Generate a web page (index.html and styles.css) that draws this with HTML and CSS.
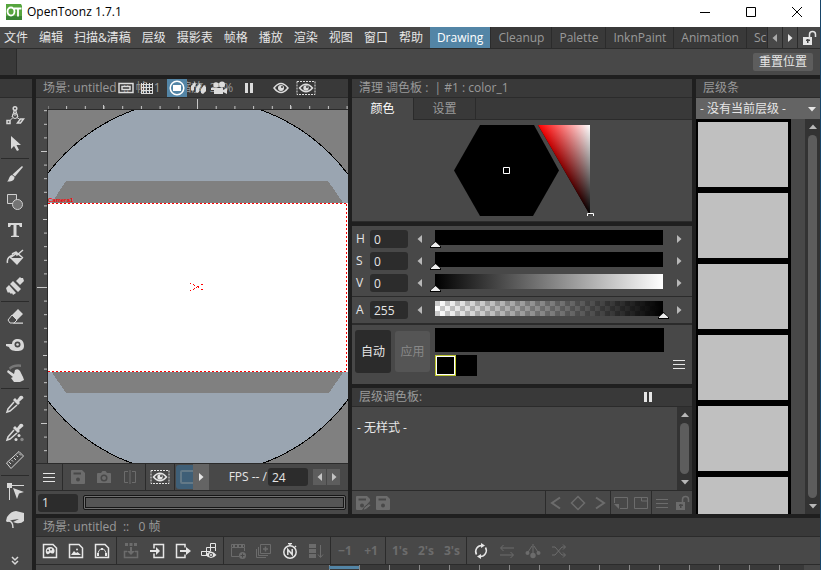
FILE: index.html
```html
<!DOCTYPE html>
<html lang="zh-CN">
<head>
<meta charset="utf-8">
<meta name="viewport" content="width=device-width, initial-scale=1">
<title>OpenToonz 1.7.1</title>
<link rel="stylesheet" href="styles.css">
</head>
<body>
<svg class="sprite" aria-hidden="true">
  <defs>
    <symbol id="i-menu" viewBox="0 0 16 16"><path d="M2 4.500h12M2 8.500h12M2 12.500h12" class="s"/></symbol>
    <symbol id="i-left" viewBox="0 0 16 16"><path d="M10 4v8L5.500 8z"/></symbol>
    <symbol id="i-right" viewBox="0 0 16 16"><path d="M6 4v8l4.500-4z"/></symbol>
    <symbol id="i-up" viewBox="0 0 16 16"><path d="M4 10h8L8 5.500z"/></symbol>
    <symbol id="i-down" viewBox="0 0 16 16"><path d="M4 6h8l-4 4.500z"/></symbol>
    <symbol id="i-pause" viewBox="0 0 16 16"><path d="M4 3h3v10H4zM9 3h3v10H9z"/></symbol>
    <symbol id="i-eye" viewBox="0 0 16 16"><path d="M1 8Q8-1 15 8Q8 17 1 8z" class="s t"/><circle cx="8" cy="8" r="3"/><circle cx="9" cy="7" r="1" fill="#393939"/></symbol>
    <symbol id="i-eyebox" viewBox="0 0 20 16"><path d="M1 1.500h18v13H1z" class="s" stroke-dasharray="2 1"/><path d="M3.500 8Q10 .500 16.500 8Q10 15.500 3.500 8z" class="s t"/><circle cx="10" cy="8" r="2.700"/><circle cx="11" cy="7" r="1" fill="#393939"/></symbol>
    <symbol id="i-lock" viewBox="0 0 16 16"><path d="M2 7h9v8H2z"/><path d="M8.500 7V4.500a3 3 0 0 1 6 0V7" class="s t"/><path d="M6 9h1.500v4H6z" fill="#484848"/><path d="M5 9.500h4v1.500H5z" fill="#484848"/></symbol>
    <symbol id="i-save" viewBox="0 0 16 16"><path d="M2 1h10l3 3v10a1 1 0 0 1-1 1H2a1 1 0 0 1-1-1V2a1 1 0 0 1 1-1z"/><path d="M3.500 3.500h7.500v2H3.500z" fill="#484848"/><circle cx="8" cy="10.500" r="2" fill="#484848"/></symbol>
    <symbol id="i-saveas" viewBox="0 0 16 16"><path d="M2 1h10l3 3v2L7 15H2a1 1 0 0 1-1-1V2a1 1 0 0 1 1-1z"/><path d="M3.500 3.500h7.500v2H3.500z" fill="#484848"/><circle cx="7" cy="10.500" r="2" fill="#484848"/><path d="M8 15.500l1-3 5-4 2 2-5 4z" stroke="#484848"/></symbol>
    <symbol id="i-camera" viewBox="0 0 16 16"><path d="M2 4h3l1.500-2h3L11 4h3a1 1 0 0 1 1 1v9H1V5a1 1 0 0 1 1-1z"/><circle cx="8" cy="9" r="3.500" fill="#484848"/><circle cx="8" cy="9" r="2"/></symbol>
    <symbol id="i-compare" viewBox="0 0 16 16"><path d="M6 2.500H2.500v11H6M10 2.500h3.500v11H10M8 1v14" class="s"/></symbol>

    <symbol id="i-animate" viewBox="0 0 20 20"><circle cx="10" cy="3.500" r="1.800" class="s t"/><circle cx="10" cy="11" r="2.500" class="s"/><path d="M10 5.500V11M9 6l-2 6M11 6l2 6M8 12.500l-3 3M12 12.500l3 2" class="s"/><path d="M2 15.500h3v3H2zM12.500 18l3-4h3l-3 4z" class="s t"/></symbol>
    <symbol id="i-arrow" viewBox="0 0 20 20"><path d="M6 3v13l3-3 3 5 2-1-2.500-5H16z"/></symbol>
    <symbol id="i-brush" viewBox="0 0 20 20"><path d="M18 3L10 12.500 7.500 10.500 17 2zM7 11l2.500 2c0 4-4 5-7.500 4.500 2-1 2-6 5-6.500z"/></symbol>
    <symbol id="i-shapes" viewBox="0 0 20 20"><path d="M2.500 2.500h9v9h-9z" fill="#5a5a5a" stroke="#d0d0d0"/><circle cx="12.500" cy="12.500" r="5" fill="#747474" stroke="#d0d0d0"/></symbol>
    <symbol id="i-type" viewBox="0 0 20 20"><path d="M3 3h14v4h-2L14 5h-2.500v10.500L14 16v1H6v-1l2.500-.500V5H6L5 7H3z"/></symbol>
    <symbol id="i-fill" viewBox="0 0 20 20"><path d="M5 10h13l-6 7z"/><path d="M5 10l7-5 6 5M2.500 15C1.500 10 5 8 8 7M7 6l4-2 1 3 6-5" class="s t"/></symbol>
    <symbol id="i-paint" viewBox="0 0 20 20"><path d="M4 9l7 8-3 2-1-2-1 1-2-2-1 1-1-2-1-3zM5 8l3-3 8 8-3 3zM11 5l4-4 1 1h2l1 3-4 4z"/></symbol>
    <symbol id="i-eraser" viewBox="0 0 20 20"><path d="M3 13l4-5 5 5-3 3H5z" class="s"/><path d="M7 8l6-6 5 5-6 6zM9 15.500h9v1.200H8z"/></symbol>
    <symbol id="i-tape" viewBox="0 0 20 20"><path d="M1 9h6c0-3 2-5 6-5 5 0 6 4 6 7 0 4-3 5-7 5s-7-1-8-4L1 11z"/><circle cx="12.500" cy="9.500" r="3" fill="#484848"/><circle cx="12.500" cy="9.500" r="1.300"/></symbol>
    <symbol id="i-finger" viewBox="0 0 20 20"><path d="M4 4.500q5-4 12-3v2.500Q9 3 5 7z" fill="#777"/><path d="M3 7l6 4 1-4q3-2 5 1l3 6 1 3-4 2H9l-3-4 2-1-6-5z"/></symbol>
    <symbol id="i-picker" viewBox="0 0 20 20"><path d="M11 5l1 1 3-4q3-1 3.500 2L14 8l1 1-2 2-5-5 2-2z"/><path d="M9 8l-6 7-1 3 3-1 7-6" class="s t"/></symbol>
    <symbol id="i-rgb" viewBox="0 0 20 20"><path d="M11 5l1 1 3-4q3-1 3.500 2L14 8l1 1-2 2-5-5 2-2z"/><path d="M9 8l-6 7-1 3 3-1 7-6" class="s t"/><circle cx="14" cy="13.500" r="1.500"/><circle cx="11" cy="17.500" r="1.500"/><circle cx="17" cy="17.500" r="1.700" fill="#888"/></symbol>
    <symbol id="i-ruler" viewBox="0 0 20 20"><path d="M1.500 13L14 1.500 18.500 6 6 18.500zM4 12l2 2M6.500 10l1.500 1.500M9 8l2 2M11.500 5.500L13 7M14 3.500l2 2" class="s"/></symbol>
    <symbol id="i-control" viewBox="0 0 20 20"><path d="M2 2h5v5H2zM8 7l11 4-5 1.500L12 18z"/><path d="M7 4.500h12M4.500 7v12" class="s"/></symbol>
    <symbol id="i-pinch" viewBox="0 0 20 20"><path d="M2 8q4-6 9-6l8 2v8q-3 3-8 2l-3-1 6-3-7 1-5 2-1-1z"/><path d="M2 12q6-1 6 7" class="s t"/></symbol>
    <symbol id="i-more" viewBox="0 0 20 20"><path d="M7 6l3 3 3-3M7 10l3 3 3-3" class="s t"/></symbol>

    <symbol id="i-safe" viewBox="0 0 16 16"><path d="M1 3.500h14v9H1zM4 6.500h8v3H4z" class="s t"/></symbol>
    <symbol id="i-grid" viewBox="0 0 16 16"><path d="M4.500 3v11M7.500 3v11M10.500 3v11M2 4.500h12M2 7.500h12M2 10.500h12M2.500 3v11M13.500 3v11M2 13.500h12" class="s"/></symbol>
    <symbol id="i-camview" viewBox="0 0 16 16"><circle cx="8" cy="8" r="6.800" class="s t"/><path d="M4 5h8v6H4z"/></symbol>
    <symbol id="i-three" viewBox="0 0 16 16"><path d="M1 10V6l4-4 1 3-2 2v3l-2 1zM6 12V8l4-5 1 3-2 3v3l-2 1zM11 13V9l3-4 2 2v4l-3 3z"/></symbol>
    <symbol id="i-movie" viewBox="0 0 16 16"><circle cx="5" cy="5" r="2.700"/><circle cx="11" cy="4.500" r="3"/><path d="M3 8h9v6H3zM12 10l4-2v6l-4-2zM0 8h3v2H0z"/></symbol>

    <symbol id="i-page-pal" viewBox="0 0 16 16"><path d="M1.500 1.500H11L14.500 5v9.500h-13z" class="s t"/><path d="M8 4c3 0 5 2 4.500 4.500S10 11 9 10s-2 2-4 1-2-7 3-7z"/><circle cx="6" cy="7.500" r="1" fill="#484848"/><circle cx="9" cy="6.500" r="1" fill="#484848"/></symbol>
    <symbol id="i-page-img" viewBox="0 0 16 16"><path d="M1.500 1.500H11L14.500 5v9.500h-13z" class="s t"/><path d="M3 12l3-4 2 2 1.500-1L13 12z"/><circle cx="9" cy="6.500" r="1"/></symbol>
    <symbol id="i-page-vec" viewBox="0 0 16 16"><path d="M1.500 1.500H11L14.500 5v9.500h-13z" class="s t"/><path d="M4 12q0-6 4-6t4 6" class="s"/><path d="M3 10h2v3H3zM11 10h2v3h-2zM7 5h2v2H7z"/></symbol>
    <symbol id="i-load" viewBox="0 0 16 16"><path d="M2 0h3v3H2zM6.500 0h3v3h-3zM11 0h3v3h-3zM7 4h2v4h3l-4 4-4-4h3z"/><path d="M4 8.500H1.500v6h13v-6H12" class="s t"/></symbol>
    <symbol id="i-in" viewBox="0 0 16 16"><path d="M5 5.500v-4h9.500v13H5v-4" class="s t"/><path d="M1 7h6V4l4 4-4 4V9H1z"/></symbol>
    <symbol id="i-out" viewBox="0 0 16 16"><path d="M10 4.500v-3H1.500v13H10v-3" class="s t"/><path d="M5 7h6V4l5 4-5 4V9H5z"/></symbol>
    <symbol id="i-gridview" viewBox="0 0 16 16"><path d="M5 12.500H.500v-4h9M5.500 13V4.500h9V8M9.500 8V.500h5v4M.500 8.500h6" class="s"/><path d="M4.500 12q5.500-7 11 0-5.500 6-11 0z"/><circle cx="10" cy="12" r="2" fill="#484848"/><circle cx="10" cy="12" r="1"/></symbol>
    <symbol id="i-newframe" viewBox="0 0 16 16"><path d="M9 13.500H1.500V4.500h13V8M1.500 4V1.500h13V4" class="s"/><path d="M3 2h2v2H3zM7 2h2v2H7zM11 2h2v2h-2z"/><circle cx="12.500" cy="12.500" r="3.500"/><path d="M12.500 10.500v4M10.500 12.500h4" stroke="#484848"/></symbol>
    <symbol id="i-dup" viewBox="0 0 16 16"><path d="M4.500 1.500h10v9h-10zM2.500 4v8.500H12M.500 6v8.500H10" class="s"/><path d="M9.500 3.500v5M7 6h5" class="s t"/></symbol>
    <symbol id="i-timer" viewBox="0 0 16 16"><circle cx="8" cy="9" r="6.200" class="s t"/><path d="M6 .500h4M8 1v2M13 3l1 1" class="s t"/><path d="M5.800 12V6.500l4.400 5V6" class="s t"/></symbol>
    <symbol id="i-stack" viewBox="0 0 16 16"><path d="M1 1h7v4H1zM1 6h7v4H1zM1 11h7v4H1z"/><path d="M12.500 2v12M10 11.500l2.500 3 2.500-3" class="s"/></symbol>
    <symbol id="i-repeat" viewBox="0 0 16 16"><path d="M9 2.500a6 6 0 0 0-5.500 9M7 13.500a6 6 0 0 0 5.500-9" class="s t"/><path d="M8 0l4 2.500L8 5zM8 11v5l-4-2.500z"/></symbol>
    <symbol id="i-swap" viewBox="0 0 16 16"><path d="M2 5h13M1 12h13M4.500 2L1.500 5l3 3M11.500 9l3 3-3 3" class="s"/></symbol>
    <symbol id="i-swing" viewBox="0 0 16 16"><path d="M8 1v10M7 3L3 9M9 3l4 6" class="s"/><circle cx="8" cy="12.500" r="2.700"/><circle cx="2.500" cy="10" r="2"/><circle cx="13.500" cy="10" r="2"/></symbol>
    <symbol id="i-random" viewBox="0 0 16 16"><path d="M1 4h3l7 8h3M1 12h3l7-8h3M12 1.500L14.500 4 12 6.500M12 9.500l2.500 2.500-2.500 2.500" class="s"/></symbol>
    <symbol id="i-prev" viewBox="0 0 16 16"><path d="M12 2.500L4 8l8 5.500" class="s w"/></symbol>
    <symbol id="i-next" viewBox="0 0 16 16"><path d="M4 2.500L12 8l-8 5.500" class="s w"/></symbol>
    <symbol id="i-key" viewBox="0 0 16 16"><path d="M8 1.500L14.500 8 8 14.500 1.500 8z" class="s t"/></symbol>
    <symbol id="i-newstyle" viewBox="0 0 16 16"><path d="M1.500 8V2.500h13v11H7" class="s"/><path d="M1 9h5v5z"/></symbol>
    <symbol id="i-newpage" viewBox="0 0 16 16"><path d="M1.500 2.500h13v11h-13zM8.500 3v3h6" class="s"/></symbol>
  </defs>
</svg>

<header class="titlebar">
  <svg class="logo" viewBox="0 0 16 16" role="img" aria-label="OpenToonz"><path fill="#56a53e" d="M0 0h15l1 2v14H0z"/><path fill="#3a8534" d="M0 12h16v4H0z"/><ellipse cx="5" cy="7.500" rx="3.500" ry="4" fill="none" stroke="#fff" stroke-width="1.800"/><path d="M8 4.500h7.500M12 5v7.500" stroke="#fff" stroke-width="1.800"/></svg>
  <h1>OpenToonz 1.7.1</h1>
  <button class="win" aria-label="最小化"><svg viewBox="0 0 12 12"><path d="M1 6.500h10"/></svg></button>
  <button class="win" aria-label="最大化"><svg viewBox="0 0 12 12"><path d="M1.500 1.500h9v9h-9z"/></svg></button>
  <button class="win" aria-label="关闭"><svg viewBox="0 0 12 12"><path d="M1 1l10 10M11 1L1 11"/></svg></button>
</header>

<nav class="menubar">
  <div class="menus">
    <button>文件</button><button>编辑</button><button>扫描&amp;清稿</button><button>层级</button><button>摄影表</button><button>帧格</button><button>播放</button><button>渲染</button><button>视图</button><button>窗口</button><button>帮助</button>
  </div>
  <div class="rooms">
    <button class="current">Drawing</button><button>Cleanup</button><button>Palette</button><button>InknPaint</button><button>Animation</button><button>Schematic</button>
  </div>
  <button class="scroll dim" aria-label="向左"><svg class="ic"><use href="#i-left"/></svg></button>
  <button class="scroll" aria-label="向右"><svg class="ic"><use href="#i-right"/></svg></button>
  <button class="roomlock" aria-label="锁定"><svg class="ic"><use href="#i-lock"/></svg></button>
</nav>

<div class="options"><button>重置位置</button></div>

<main class="workspace">
  <aside class="toolbox">
    <div class="bar"></div>
    <div class="tools">
      <button aria-label="动画"><svg><use href="#i-animate"/></svg></button>
      <button aria-label="选择"><svg><use href="#i-arrow"/></svg></button>
      <hr>
      <button aria-label="画笔"><svg><use href="#i-brush"/></svg></button>
      <button aria-label="几何"><svg><use href="#i-shapes"/></svg></button>
      <button aria-label="文字"><svg><use href="#i-type"/></svg></button>
      <button aria-label="填充"><svg><use href="#i-fill"/></svg></button>
      <button aria-label="涂刷"><svg><use href="#i-paint"/></svg></button>
      <hr>
      <button aria-label="橡皮"><svg><use href="#i-eraser"/></svg></button>
      <button aria-label="胶带"><svg><use href="#i-tape"/></svg></button>
      <button aria-label="手指"><svg><use href="#i-finger"/></svg></button>
      <hr>
      <button aria-label="取样"><svg><use href="#i-picker"/></svg></button>
      <button aria-label="RGB 取样"><svg><use href="#i-rgb"/></svg></button>
      <button aria-label="标尺"><svg><use href="#i-ruler"/></svg></button>
      <hr>
      <button aria-label="控制点"><svg><use href="#i-control"/></svg></button>
      <button aria-label="捏合"><svg><use href="#i-pinch"/></svg></button>
    </div>
    <button class="more" aria-label="更多"><svg><use href="#i-more"/></svg></button>
  </aside>

  <div class="desk">
    <div class="upper">
      <section class="viewer">
        <div class="bar">
          <span class="caption">场景: untitled&nbsp; ::&nbsp; 帧: 1&nbsp; ::&nbsp; 缩放: 35%</span>
          <div class="viewtools">
            <div class="group"><button aria-label="安全区"><svg class="ic"><use href="#i-safe"/></svg></button><button aria-label="网格"><svg class="ic"><use href="#i-grid"/></svg></button></div>
            <div class="group"><button class="on" aria-label="摄影台"><svg class="ic"><use href="#i-camview"/></svg></button><button aria-label="3D"><svg class="ic"><use href="#i-three"/></svg></button><button aria-label="摄影机"><svg class="ic"><use href="#i-movie"/></svg></button></div>
            <div class="group"><button aria-label="冻结"><svg class="ic"><use href="#i-pause"/></svg></button></div>
            <div class="group wide"><button aria-label="预览"><svg class="ic"><use href="#i-eye"/></svg></button><button aria-label="局部预览"><svg class="ic box"><use href="#i-eyebox"/></svg></button></div>
          </div>
        </div>
        <div class="stage">
          <svg viewBox="36 98 312 365" preserveAspectRatio="xMidYMid slice">
            <defs>
              <clipPath id="view"><path d="M48 110h300v353H48z"/></clipPath>
              <pattern id="tickx" x="197" y="98" width="18.700" height="12" patternUnits="userSpaceOnUse"><path fill="#c8c8c8" d="M0 8h1v3H0z"/></pattern>
              <pattern id="ticky" x="36" y="287" width="12" height="13.600" patternUnits="userSpaceOnUse"><path fill="#c8c8c8" d="M8 0h3v1H8z"/></pattern>
            </defs>
            <path fill="#484848" d="M36 98h312v365H36z"/>
            <g shape-rendering="crispEdges">
              <path fill="url(#tickx)" d="M48 98h300v11H48z"/>
              <path fill="url(#ticky)" d="M36 110h11v353H36z"/>
              <path fill="#c8c8c8" d="M197 99h1v10h-1zM103 105h1v4h-1zM290 105h1v4h-1zM37 287h10v1H37zM43 219h4v1h-4zM41 151h6v1h-6zM43 355h4v1h-4zM41 423h6v1h-6z"/>
              <path fill="#2b2b2b" d="M47 109h301v1H48v353h-1z"/>
            </g>
            <g clip-path="url(#view)" shape-rendering="crispEdges">
              <path fill="#808080" d="M48 110h300v353H48z"/>
              <circle cx="197.500" cy="287" r="188" fill="#9aa5b1" stroke="#000"/>
              <path fill="#808080" d="M66 181h262l16 23v167l-15 22H66l-15-22V204z"/>
              <path fill="#fff" d="M48 204h300v167H48z"/>
              <path fill="none" stroke="#fff" d="M48 203.500h300M48 371.500h300"/>
              <path fill="none" stroke="#f00" stroke-dasharray="2 2" d="M48 203.500h300M48 371.500h300M346.500 204v168"/>
              <path fill="#f00" d="M190 283h1v1h-1zM190 290h1v1h-1zM193 284h1v1h-1zM194 285h1v1h-1zM194 288h1v1h-1zM193 289h1v1h-1zM197 286h2v1h-2zM198 287h1v1h-1zM201 284h2v1h-2zM201 289h2v1h-2zM196 287h1v1h-1z"/>
            </g>
            <text x="48" y="202" class="camname">Camera1</text>
          </svg>
        </div>
        <div class="playbar">
          <div class="cell"><button aria-label="选项"><svg class="ic"><use href="#i-menu"/></svg></button></div>
          <div class="cell dim spread"><button aria-label="保存"><svg class="ic"><use href="#i-save"/></svg></button><button aria-label="快照"><svg class="ic"><use href="#i-camera"/></svg></button><button aria-label="比较"><svg class="ic"><use href="#i-compare"/></svg></button></div>
          <div class="cell eye"><button aria-label="预览框"><svg class="ic box"><use href="#i-eyebox"/></svg></button></div>
          <button class="bluebtn" aria-label="背景"><i></i></button>
          <button class="greybtn" aria-label="展开"><svg class="ic"><use href="#i-right"/></svg></button>
          <label class="fps" for="fps">FPS -- /</label>
          <input id="fps" class="num" value="24">
          <div class="steps"><button aria-label="减少"><svg class="ic"><use href="#i-left"/></svg></button><button aria-label="增加"><svg class="ic"><use href="#i-right"/></svg></button></div>
        </div>
        <div class="framebar">
          <input class="num" aria-label="当前帧" value="1">
          <div class="slider"></div>
        </div>
      </section>

      <div class="middle">
        <section class="panel">
          <div class="bar"><span class="caption">清理 调色板 :&nbsp; | #1 : color_1</span></div>
          <div class="tabs"><button class="current">颜色</button><button>设置</button></div>
          <div class="wheel">
            <svg viewBox="0 0 142 94" aria-label="色轮">
              <defs>
                <linearGradient id="red" x1="0" y1="0" x2="0" y2="1"><stop stop-color="#f00"/><stop offset="1" stop-color="#000"/></linearGradient>
                <linearGradient id="cyan" gradientUnits="userSpaceOnUse" x1="97" y1="22.500" x2="136" y2="0"><stop stop-color="#000"/><stop offset="1" stop-color="#0ff"/></linearGradient>
              </defs>
              <path d="M0 45.500L26 0h54l25 45.500L79 91H26z"/>
              <g class="mix"><path fill="url(#red)" d="M84 0h52v90z"/><path class="add" fill="url(#cyan)" d="M84 0h52v90z"/></g>
              <path fill="none" stroke="#fff" d="M49.500 42.500h6v6h-6zM133.500 91v-2.500h6V91"/>
            </svg>
          </div>
        </section>
        <section class="sliders">
          <div class="row"><label for="h">H</label><input class="num" id="h" value="0"><button aria-label="减少 H"><svg class="ic"><use href="#i-left"/></svg></button><div class="track"><i class="knob"></i></div><button aria-label="增加 H"><svg class="ic"><use href="#i-right"/></svg></button></div>
          <div class="row"><label for="s">S</label><input class="num" id="s" value="0"><button aria-label="减少 S"><svg class="ic"><use href="#i-left"/></svg></button><div class="track"><i class="knob"></i></div><button aria-label="增加 S"><svg class="ic"><use href="#i-right"/></svg></button></div>
          <div class="row"><label for="v">V</label><input class="num" id="v" value="0"><button aria-label="减少 V"><svg class="ic"><use href="#i-left"/></svg></button><div class="track value"><i class="knob"></i></div><button aria-label="增加 V"><svg class="ic"><use href="#i-right"/></svg></button></div>
          <div class="row alpha"><label for="a">A</label><input class="num" id="a" value="255"><button aria-label="减少 A"><svg class="ic"><use href="#i-left"/></svg></button><div class="track matte"><i class="knob end"></i></div><button aria-label="增加 A"><svg class="ic"><use href="#i-right"/></svg></button></div>
          <div class="apply">
            <button class="auto">自动</button>
            <button class="use" disabled>应用</button>
            <div class="colors"><div class="big"></div><div class="pair"><i class="picked"></i><i></i></div></div>
            <button class="opts" aria-label="选项"><svg class="ic"><use href="#i-menu"/></svg></button>
          </div>
        </section>
        <section class="palette">
          <div class="bar"><span class="caption">层级调色板:</span><button aria-label="冻结"><svg class="ic"><use href="#i-pause"/></svg></button></div>
          <div class="list">
            <p>- 无样式 -</p>
            <div class="scrollbar"><svg class="ic"><use href="#i-up"/></svg><i></i><svg class="ic"><use href="#i-down"/></svg></div>
          </div>
          <div class="foot dim">
            <div class="first"><button aria-label="另存"><svg class="ic"><use href="#i-saveas"/></svg></button><button aria-label="保存"><svg class="ic"><use href="#i-save"/></svg></button></div>
            <div class="keys"><button aria-label="上一个"><svg class="ic"><use href="#i-prev"/></svg></button><button aria-label="关键帧"><svg class="ic"><use href="#i-key"/></svg></button><button aria-label="下一个"><svg class="ic"><use href="#i-next"/></svg></button></div>
            <div><button aria-label="新建样式"><svg class="ic"><use href="#i-newstyle"/></svg></button><button aria-label="新建页"><svg class="ic"><use href="#i-newpage"/></svg></button></div>
            <div><button aria-label="选项"><svg class="ic"><use href="#i-menu"/></svg></button><button aria-label="锁定"><svg class="ic"><use href="#i-lock"/></svg></button></div>
          </div>
        </section>
      </div>

      <section class="strip">
        <div class="bar"><span class="caption">层级条</span></div>
        <div class="pick"><select aria-label="当前层级"><option>- 没有当前层级 -</option></select><svg class="ic"><use href="#i-down"/></svg></div>
        <div class="frames">
          <div class="film"><i></i><i></i><i></i><i></i><i></i><i></i></div>
          <div class="scrollbar"><svg class="ic"><use href="#i-up"/></svg><i></i><svg class="ic"><use href="#i-down"/></svg></div>
        </div>
      </section>
    </div>

    <section class="xsheet">
      <div class="bar"><span class="caption">场景: untitled&nbsp; ::&nbsp;&nbsp; 0 帧</span></div>
      <div class="commands">
        <div><button aria-label="新建 Toonz 层"><svg class="ic"><use href="#i-page-pal"/></svg></button><button aria-label="新建位图层"><svg class="ic"><use href="#i-page-img"/></svg></button><button aria-label="新建矢量层"><svg class="ic"><use href="#i-page-vec"/></svg></button></div>
        <div><button class="dim" aria-label="载入"><svg class="ic"><use href="#i-load"/></svg></button><button aria-label="进入"><svg class="ic"><use href="#i-in"/></svg></button><button aria-label="退出"><svg class="ic"><use href="#i-out"/></svg></button><button aria-label="切换"><svg class="ic"><use href="#i-gridview"/></svg></button></div>
        <div><button class="dim" aria-label="新建帧"><svg class="ic"><use href="#i-newframe"/></svg></button><button class="dim" aria-label="复制帧"><svg class="ic"><use href="#i-dup"/></svg></button><button aria-label="自动输入"><svg class="ic"><use href="#i-timer"/></svg></button><button class="dim" aria-label="填入"><svg class="ic"><use href="#i-stack"/></svg></button></div>
        <div><button class="dim">−1</button><button class="dim">+1</button></div>
        <div><button class="dim">1's</button><button class="dim">2's</button><button class="dim">3's</button></div>
        <div><button aria-label="循环"><svg class="ic"><use href="#i-repeat"/></svg></button><button class="dim" aria-label="反转"><svg class="ic"><use href="#i-swap"/></svg></button><button class="dim" aria-label="摆动"><svg class="ic"><use href="#i-swing"/></svg></button><button class="dim" aria-label="随机"><svg class="ic"><use href="#i-random"/></svg></button></div>
      </div>
      <div class="timeline"><div class="columns"></div><div class="cells"></div><div class="tail"></div></div>
    </section>
  </div>
</main>
</body>
</html>
```
FILE: styles.css
```css
* { box-sizing: border-box; }

body {
  margin: 0;
  height: 100vh;
  display: flex;
  flex-direction: column;
  overflow: hidden;
  background: #1f1f1f;
  border-right: 1px solid #174468;
  color: #e6e6e6;
  font: 12px/16px "Open Sans", "Noto Sans CJK SC", sans-serif;
}

button, input, select { font: inherit; color: inherit; }
button {
  display: flex;
  align-items: center;
  justify-content: center;
  margin: 0;
  padding: 0;
  border: 0;
  background: none;
  white-space: nowrap;
}
svg { display: block; flex: none; fill: currentColor; }
.s { fill: none; stroke: currentColor; }
.t { stroke-width: 1.5; }
.w { stroke-width: 2; }
.sprite { position: absolute; width: 0; height: 0; }
.ic { width: 16px; height: 16px; }
.ic.box { width: 20px; }
.dim { color: #6c6c6c; }

/* Title bar */
.titlebar {
  flex: none;
  display: flex;
  align-items: center;
  height: 27px;
  padding: 0 0 4px 6px;
  background: #fff;
  color: #000;
}
.logo { width: 16px; height: 16px; }
h1 { margin: 0 auto 0 5px; font-size: 12px; font-weight: 400; }
.win { width: 46px; height: 22px; }
.win svg { width: 12px; height: 12px; fill: none; stroke: #000; }

/* Menu bar */
.menubar {
  flex: none;
  display: flex;
  height: 22px;
  background: #484848;
  border-bottom: 1px solid #2b2b2b;
}
.menus { display: flex; gap: 11px; padding: 0 7px 0 4px; flex: none; }
.rooms { display: flex; flex: 1; min-width: 0; overflow: hidden; background: #393939; }
.rooms button { flex: none; padding: 0 7px; border-right: 1px solid #2b2b2b; color: #999; }
.rooms .current { background: #5385a6; color: #fff; }
.scroll { width: 15px; border-left: 1px solid #2b2b2b; }
.scroll.dim { color: #aaa; }
.roomlock { width: 23px; border-left: 1px solid #2b2b2b; }

.options {
  flex: none;
  display: flex;
  justify-content: flex-end;
  align-items: center;
  height: 26px;
  padding-right: 7px;
  background: linear-gradient(90deg, #393939 16px, #2b2b2b 16px, #2b2b2b 17px, #484848 17px);
}
.options button { height: 18px; padding: 0 6px; border-radius: 2px; background: #5d5d5d; }

/* Shared panel header */
.bar {
  flex: none;
  display: flex;
  align-items: center;
  height: 19px;
  background: #393939;
  border-bottom: 1px solid #2b2b2b;
}
.caption { padding-left: 7px; color: #999; white-space: nowrap; }

.workspace { flex: 1; min-height: 0; display: flex; gap: 4px; padding-top: 4px; }
.toolbox { flex: none; width: 32px; display: flex; flex-direction: column; background: #484848; color: #d8d8d8; }
.tools { padding: 3px 3px 0 1px; flex: 1; min-height: 0; }
.tools button { width: 28px; height: 28px; }
.toolbox svg { width: 20px; height: 20px; }
.tools hr { height: 1px; margin: 1px 0; border: 0; background: #2b2b2b; }
.more { width: 30px; height: 18px; }

.desk { flex: 1; min-width: 0; display: flex; flex-direction: column; gap: 4px; }
.upper { flex: 1; min-height: 0; display: flex; gap: 4px; }

/* Viewer */
.viewer { flex: 1; min-width: 0; display: flex; flex-direction: column; background: #484848; }
.viewer .bar { position: relative; }
.viewtools { position: absolute; left: 80px; top: 0; display: flex; gap: 10px; color: #dcdcdc; }
.group { display: flex; gap: 1px; }
.group button { width: 20px; height: 18px; }
.group.wide button { width: 24px; }
.group .on { background: #5385a6; color: #fff; }
.stage { flex: 1; min-height: 0; overflow: hidden; }
.stage svg { width: 100%; height: 100%; }
.camname { fill: #f00; font: bold 6px "Liberation Sans", sans-serif; }
.playbar {
  flex: none;
  display: flex;
  align-items: center;
  height: 28px;
  border: solid #2b2b2b;
  border-width: 1px 0;
}
.cell { align-self: stretch; display: flex; align-items: center; padding: 0 5px; border-right: 1px solid #2b2b2b; }
.spread { gap: 10px; padding: 0 7px; }
.cell.eye { padding: 0 4px; }
.bluebtn { width: 17px; height: 24px; margin-left: 1px; padding-left: 4px; border-radius: 3px 0 0 3px; background: #3f5f77; overflow: hidden; justify-content: flex-start; }
.bluebtn i { flex: none; width: 16px; height: 14px; border: 2px solid #637987; border-radius: 2px; }
.greybtn { width: 16px; align-self: stretch; background: #646464; }
.fps { margin: 0 1px 0 auto; white-space: nowrap; }
.num { height: 18px; width: 40px; padding: 0 4px; border: 0; border-radius: 3px; background: #2c2c2c; outline: 0; }
.steps { display: flex; gap: 1px; margin: 0 8px 0 5px; color: #c4c4c4; }
.steps button { width: 13px; height: 16px; background: #5d5d5d; }
.framebar { flex: none; display: flex; align-items: center; gap: 5px; height: 23px; padding: 0 2px; }
.slider { flex: 1; height: 15px; border: 1px solid #161616; outline: 1px solid #707070; outline-offset: -2px; box-shadow: inset 0 0 0 2px #161616; border-radius: 2px; background: #555; }

/* Colour panels */
.middle { flex: none; width: 340px; display: flex; flex-direction: column; gap: 4px; }
.panel, .sliders, .palette, .strip { display: flex; flex-direction: column; background: #484848; }
.panel { flex: none; border-bottom: 1px solid #2b2b2b; }
.tabs { display: flex; height: 22px; background: linear-gradient(#393939 21px, #2b2b2b 21px); }
.tabs button { width: 62px; height: 21px; border-right: 1px solid #2b2b2b; color: #999; }
.tabs .current { height: 22px; background: #484848; color: #fff; }
.wheel { display: flex; justify-content: center; padding: 5px 0 2px 5px; }
.wheel svg { width: 142px; height: 94px; fill: #000; }
.mix { isolation: isolate; }
.add { mix-blend-mode: screen; }

.sliders { flex: none; }
.row { display: flex; align-items: center; height: 22px; padding: 2px 5px 2px 4px; }
.sliders > :first-child { margin-top: 2px; }
.row label { width: 14px; }
.row .num { width: 38px; }
.row button { width: 16px; margin-left: 4px; color: #b8b8b8; }
.row button:last-child { margin: 0; }
.track { flex: 1; position: relative; height: 15px; margin: 0 8px 3px 7px; background: #000; }
.track.value { background: linear-gradient(90deg, #000, #fff); }
.track.matte { background: linear-gradient(90deg, transparent, #000), repeating-conic-gradient(#fff 0 25%, #ccc 0 50%) 0 0 / 10px 10px; }
.knob { position: absolute; left: -5px; bottom: -3px; width: 11px; height: 7px; background: #000; clip-path: polygon(50% 0, 100% 80%, 100% 100%, 0 100%, 0 80%); }
.knob::after { content: ""; position: absolute; inset: 1px; background: #eee; clip-path: polygon(50% 0, 100% 80%, 100% 100%, 0 100%, 0 80%); }
.knob.end { left: auto; right: -6px; }
.row.alpha { height: 29px; margin-top: 2px; border: solid #2b2b2b; border-width: 1px 0 2px; }
.apply { display: flex; align-items: flex-start; padding: 3px 5px 8px 3px; }
.auto { width: 36px; height: 43px; margin-top: 2px; border-radius: 3px; background: #2b2b2b; }
.use { width: 35px; height: 41px; margin: 3px 0 0 4px; border-radius: 3px; background: #555; color: #888; }
.colors { flex: 1; margin: 0 7px 0 5px; }
.big { height: 24px; background: #000; }
.pair { display: flex; margin-top: 3px; }
.pair i { width: 21px; height: 21px; background: #000; }
.pair .picked { border: 1px solid #bcc62c; box-shadow: inset 0 0 0 1px #fff; }
.opts { margin-top: 28px; }

.palette { flex: 1; min-height: 0; }
.palette .bar { justify-content: space-between; padding-right: 36px; }
.list { flex: 1; min-height: 0; display: flex; justify-content: space-between; }
.list p { margin: 13px 0 0 5px; }
.scrollbar { flex: none; width: 15px; display: flex; flex-direction: column; align-items: center; background: #333; color: #b8b8b8; }
.scrollbar i { flex: 1; width: 9px; border-radius: 5px; background: #5d5d5d; }
.foot { flex: none; display: flex; height: 24px; border-top: 1px solid #2b2b2b; }
.foot div { display: flex; align-items: center; gap: 4px; padding: 0 2px; }
.foot div + div { border-left: 1px solid #2b2b2b; }
.foot .first { flex: 1; padding-left: 3px; }
.foot .keys { gap: 6px; }

/* Level strip */
.strip { flex: none; width: 124px; }
.pick { flex: none; display: flex; align-items: center; height: 21px; background: #646464; }
.pick select { flex: 1; min-width: 0; padding: 0 0 0 4px; border: 0; background: none; appearance: none; }
.frames { flex: 1; min-height: 0; display: flex; justify-content: space-between; }
.film { display: flex; flex-direction: column; gap: 6px; width: 95px; padding: 3px 3px 0 2px; background: #000; overflow: hidden; }
.film i { flex: none; height: 65px; background: #c0c0c0; }

/* Xsheet */
.xsheet { flex: none; background: #484848; }
.commands { display: flex; height: 28px; border-bottom: 1px solid #2b2b2b; }
.commands div { display: flex; align-items: center; padding: 0 1px; border-right: 1px solid #2b2b2b; }
.commands div:last-child { border: 0; }
.commands button { width: 26px; height: 24px; font-weight: 700; }
.timeline { display: flex; height: 5px; }
.columns { width: 293px; }
.cells { flex: 1; background: linear-gradient(#5385a6, #5385a6) 0 1px / 30px 3px no-repeat, repeating-linear-gradient(90deg, #888 0 1px, #393939 1px 30px); }
.tail { width: 16px; }
```
